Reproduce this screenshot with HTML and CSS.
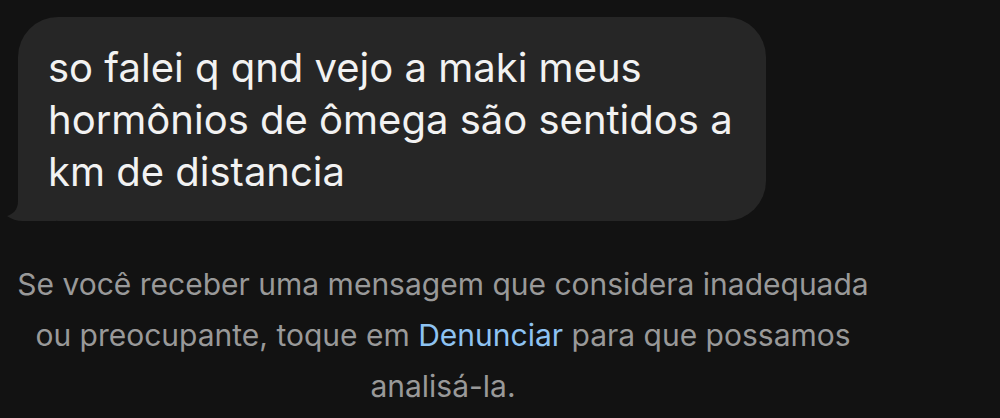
FILE: index.html
```html
<!DOCTYPE html>
<html lang="pt">
<head>
  <meta charset="UTF-8" />
  <meta name="viewport" content="width=device-width, initial-scale=1.0" />
  <title>Mensagem</title>
  <link rel="stylesheet" href="styles.css">
</head>
<body>
  <div class="thread">
    <div class="bubble">
      <p class="message">so falei q qnd vejo a maki meus hormônios de ômega são sentidos a km de distancia</p>
      <svg class="tail" width="50" height="40" viewBox="0 0 50 40">
        <path d="M12 0 H50 V40 H17 C11 40 5 38 1 35 C7 33 12 29 12 20 Z" fill="#262626" />
      </svg>
    </div>

    <p class="notice">
      Se você receber uma mensagem que considera inadequada ou preocupante, toque em
      <a href="#" class="report">Denunciar</a> para que possamos analisá-la.
    </p>
  </div>
</body>
</html>
```

FILE: styles.css
```css
body {
  margin: 0;
  background-color: #121212;
  font-family: Inter, "Noto Sans", sans-serif;
  -webkit-font-smoothing: antialiased;
}
.thread {
  padding-top: 17px;
}
.bubble {
  position: relative;
  margin-left: 18px;
  width: 748px;
  height: 204px;
  box-sizing: border-box;
  padding: 25px 30px 23px 30px;
  background-color: #262626;
  border-radius: 40px;
}
.message {
  position: relative;
  z-index: 1;
  margin: 0;
  color: #f2f2f2;
  font-size: 40px;
  line-height: 52px;
}
.tail {
  position: absolute;
  left: -12px;
  bottom: 0;
}
.notice {
  width: 870px;
  margin: 38px 0 0 8px;
  text-align: center;
  color: #999999;
  font-size: 30px;
  line-height: 51px;
}
.report {
  color: #8ec3f2;
  text-decoration: none;
}
```
